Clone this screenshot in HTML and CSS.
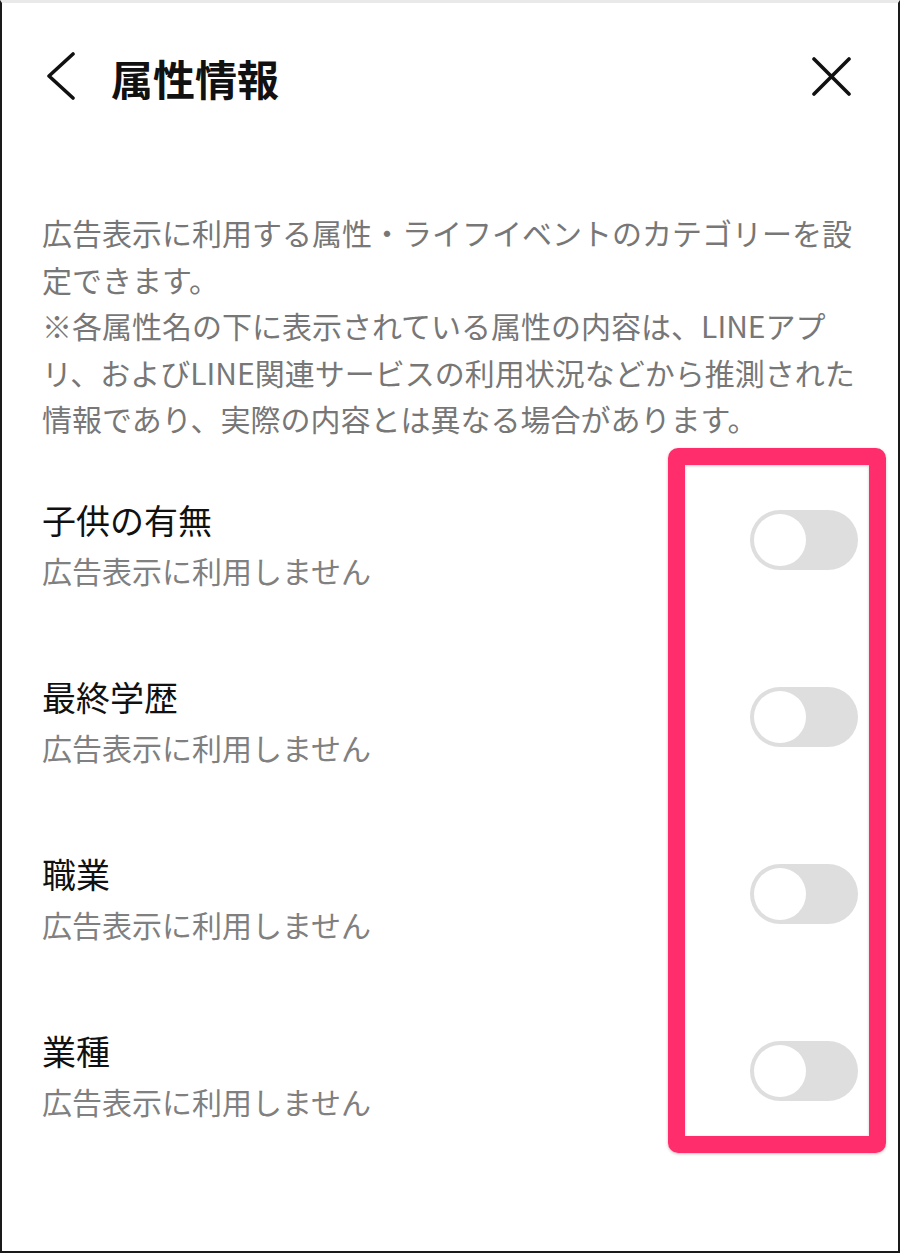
FILE: index.html
```html
<!DOCTYPE html>
<html lang="ja">
<head>
<meta charset="utf-8">
<title>属性情報</title>
<link rel="stylesheet" href="styles.css">
</head>
<body>
<div class="screen">
  <header class="header">
    <svg class="back" width="36" height="52" viewBox="0 0 36 52"><path d="M31 2 L7 24 L31 46" fill="none" stroke="#111" stroke-width="3.6" stroke-linecap="round" stroke-linejoin="round"/></svg>
    <h1 class="title">属性情報</h1>
    <svg class="close" width="48" height="48" viewBox="0 0 48 48"><path d="M2 5 L37 40 M37 5 L2 40" fill="none" stroke="#111" stroke-width="3.6" stroke-linecap="round"/></svg>
  </header>
  <p class="desc">広告表示に利用する属性・ライフイベントのカテゴリーを設<br>定できます。<br>※各属性名の下に表示されている属性の内容は、LINEアプ<br>リ、およびLINE関連サービスの利用状況などから推測された<br>情報であり、実際の内容とは異なる場合があります。</p>
  <ul class="list">
    <li class="item"><div class="text"><div class="name">子供の有無</div><div class="sub">広告表示に利用しません</div></div><span class="toggle"><span class="knob"></span></span></li>
    <li class="item"><div class="text"><div class="name">最終学歴</div><div class="sub">広告表示に利用しません</div></div><span class="toggle"><span class="knob"></span></span></li>
    <li class="item"><div class="text"><div class="name">職業</div><div class="sub">広告表示に利用しません</div></div><span class="toggle"><span class="knob"></span></span></li>
    <li class="item"><div class="text"><div class="name">業種</div><div class="sub">広告表示に利用しません</div></div><span class="toggle"><span class="knob"></span></span></li>
  </ul>
  <div class="highlight"></div>
</div>
</body>
</html>
```
FILE: styles.css
```css
html, body {
  margin: 0;
  padding: 0;
  background: #fff;
}
.screen {
  position: relative;
  box-sizing: border-box;
  width: 900px;
  height: 1253px;
  border-left: 2px solid #1a1a1a;
  border-right: 2px solid #1a1a1a;
  border-bottom: 2px solid #1a1a1a;
  border-top: 3px solid #e9e9e9;
  padding: 0 40px;
  font-family: "Noto Sans CJK JP", "Noto Sans", sans-serif;
  overflow: hidden;
}
.header {
  display: flex;
  align-items: center;
  height: 149px;
}
.back {
  display: block;
  flex: none;
}
.title {
  margin: 0 0 0 33px;
  font-size: 42px;
  font-weight: 700;
  color: #111;
  line-height: 1;
  flex: 1;
}
.close {
  display: block;
  flex: none;
  margin-right: -2px;
}
.desc {
  margin: 57px 0 0;
  font-size: 30px;
  line-height: 46.5px;
  color: #777;
  white-space: nowrap;
}
.list {
  list-style: none;
  margin: 53px 0 0;
  padding: 0;
  display: flex;
  flex-direction: column;
  gap: 77px;
}
.item {
  display: flex;
  align-items: center;
  justify-content: space-between;
  height: 100px;
}
.name {
  font-size: 34px;
  line-height: 50px;
  color: #111;
}
.sub {
  font-size: 30px;
  line-height: 50px;
  color: #808080;
}
.toggle {
  position: relative;
  flex: none;
  width: 108px;
  height: 60px;
  border-radius: 30px;
  background: #dedede;
  margin-bottom: 10px;
}
.knob {
  position: absolute;
  left: 4px;
  top: 4px;
  width: 52px;
  height: 52px;
  border-radius: 50%;
  background: #fff;
}
.highlight {
  position: absolute;
  left: 666px;
  top: 445px;
  width: 218px;
  height: 705px;
  box-sizing: border-box;
  border: 17px solid #ff2d6b;
  border-radius: 10px;
  box-shadow: 0 1px 3px rgba(0,0,0,0.25), inset 0 1px 3px rgba(0,0,0,0.2);
}
```
